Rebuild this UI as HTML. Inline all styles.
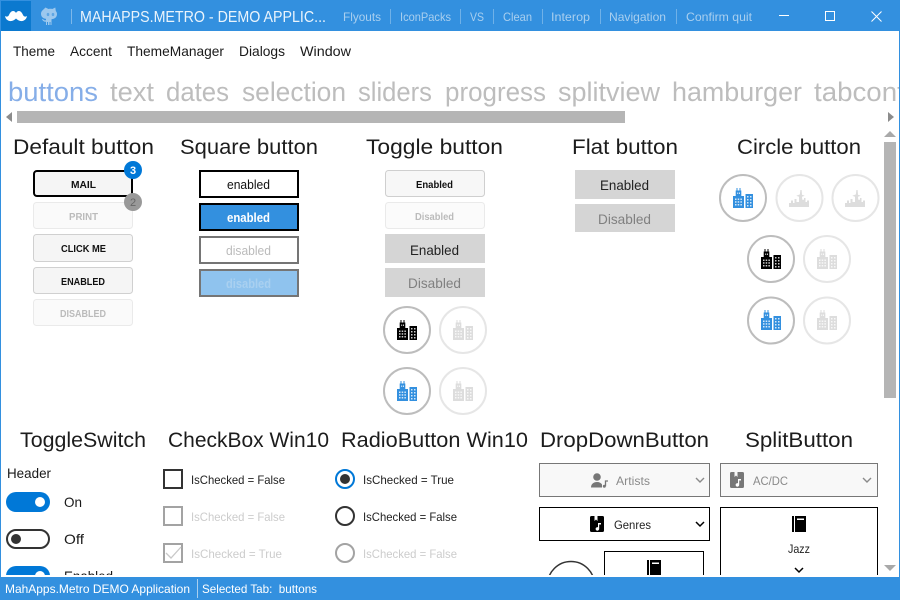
<!DOCTYPE html>
<html lang="en"><head><meta charset="utf-8"><title>MahApps.Metro - Demo Application</title>
<style>
html,body{margin:0;padding:0;background:#fff;width:900px;height:600px;overflow:hidden}
svg{display:block;position:absolute;left:0;top:0}
text{font-family:"Liberation Sans",sans-serif;white-space:pre}
.h{font-size:21px;fill:#1c1c1c}
.m{font-size:14px;fill:#1a1a1a}
.t{font-size:27px;fill:#bdbdbd}
.c{font-size:12px;fill:#a9cfef}
.b{font-size:10px;font-weight:bold;fill:#111}
.d{font-size:10px;font-weight:bold;fill:#bbb}
.s{font-size:12px;fill:#222}
.sd{font-size:12px;fill:#ccc}
.f{font-size:14px;fill:#222}
.fd{font-size:14px;fill:#808080}
</style></head><body>
<svg width="900" height="600" viewBox="0 0 900 600" xmlns="http://www.w3.org/2000/svg">
<defs>
<symbol id="city" viewBox="0 0 20 20">
<path fill="currentColor" d="M3.500 0h1v2.500h2V0h1v2.500h.8V8H11v12H0V8h2.700V2.500h.8zM12.500 6H20v14h-7.500z"/>
<g fill="#fff" fill-opacity=".8">
<rect x="2" y="10.500" width="1.500" height="1.500"/><rect x="4.700" y="10.500" width="1.500" height="1.500"/><rect x="7.400" y="10.500" width="1.500" height="1.500"/>
<rect x="2" y="13.200" width="1.500" height="1.500"/><rect x="4.700" y="13.200" width="1.500" height="1.500"/><rect x="7.400" y="13.200" width="1.500" height="1.500"/>
<rect x="2" y="16" width="1.500" height="1.500"/><rect x="4.700" y="16" width="1.500" height="1.500"/><rect x="7.400" y="16" width="1.500" height="1.500"/>
<rect x="4.200" y="4.500" width="1" height="1.500"/><rect x="6" y="4.500" width="1" height="1.500"/>
<rect x="14" y="8" width="1.500" height="1.500"/><rect x="17" y="8" width="1.500" height="1.500"/>
<rect x="14" y="11" width="1.500" height="1.500"/><rect x="17" y="11" width="1.500" height="1.500"/>
<rect x="14" y="14" width="1.500" height="1.500"/><rect x="17" y="14" width="1.500" height="1.500"/>
<rect x="14" y="17" width="1.500" height="1.500"/><rect x="17" y="17" width="1.500" height="1.500"/>
</g>
</symbol>
<symbol id="sky" viewBox="0 0 20 17">
<path fill="currentColor" d="M11.400 0h1.200l.4 4.800 2.700 1-2.700 1 .3 3H15V8h1.500v4H18v-1.500h2V17H0v-4h2v-2.500h2V13h1.500V9h2v3H10V6.800l-2.700-1 2.700-1 .9-.4z"/>
</symbol>
<symbol id="book" viewBox="0 0 14 16">
<path fill="currentColor" d="M0 0h2v16H0zM3 0h11v16H3z"/><rect x="5" y="2.500" width="7" height="1.500" fill="#fff"/>
</symbol>
<symbol id="music" viewBox="0 0 14 16">
<path fill="currentColor" d="M1.500 0h3v5l1.500-1.500L7.500 5V0h5A1.500 1.500 0 0 1 14 1.500v13a1.500 1.500 0 0 1-1.500 1.500h-11A1.500 1.500 0 0 1 0 14.500v-13A1.500 1.500 0 0 1 1.500 0z"/>
<path fill="#fff" d="M8 7h3v1.500H9.200v4.300a1.800 1.800 0 1 1-1.200-1.600z"/>
</symbol>
<clipPath id="content"><rect x="1" y="32" width="882" height="543"/></clipPath>
<clipPath id="tabs"><rect x="1" y="70" width="898" height="40"/></clipPath>
</defs>

<rect width="900" height="600" fill="#fff"/>
<rect x="0" y="0" width="900" height="31" fill="#3390df"/>
<rect x="0" y="0" width="1" height="600" fill="#3390df"/>
<rect x="899" y="0" width="1" height="600" fill="#3390df"/>
<rect x="1" y="1" width="30" height="30" fill="#0b79cf"/>
<path fill="#fff" d="M5 16C6.500 17 8 17 9 15C10 12.500 11.500 11 13 11C14.500 11 15.500 12 16 13C16.500 12 17.500 11 19 11C20.500 11 22 12.500 23 15C24 17 25.500 17 27 16C26.500 19.500 23.500 21.500 20.500 21C18.500 20.700 17 19.500 16 18.500C15 19.500 13.500 20.700 11.500 21C8.500 21.500 5.500 19.500 5 16z"/>
<path fill="#9cc8ee" d="M45.500 7.500l3 1.500c1.300-.3 2.500-.3 3.800 0l3-1.500.5 3.500c.8.900 1.200 1.900 1.200 3 0 3.200-2.300 5-5.500 5.200V25h-1v-3h-1v3h-1.500v-3h-1v3h-1v-3.300c-1.500.3-3-.3-4-2.400l1-.3c.6 1 1.500 1.500 3 1.200v-1.300c-3-.4-5-2.200-5-5 0-1.100.3-2.100 1-3z"/>
<ellipse cx="48" cy="14.500" rx="1.300" ry="1.600" fill="#5ea6e4"/><ellipse cx="53" cy="14.500" rx="1.300" ry="1.600" fill="#5ea6e4"/>
<rect x="71" y="9" width="1" height="15" fill="#7db8ea"/>
<text x="80" y="22" font-size="16" fill="#eaf4fc" textLength="246" lengthAdjust="spacingAndGlyphs">MAHAPPS.METRO - DEMO APPLIC...</text>

<g class="cmd">
<text class="c" x="343" y="21" textLength="38" lengthAdjust="spacingAndGlyphs">Flyouts</text>
<rect x="390" y="9" width="1" height="15" fill="#6fb1e8"/>
<text class="c" x="400" y="21" textLength="51" lengthAdjust="spacingAndGlyphs">IconPacks</text>
<rect x="460" y="9" width="1" height="15" fill="#6fb1e8"/>
<text class="c" x="470" y="21" textLength="14" lengthAdjust="spacingAndGlyphs">VS</text>
<rect x="493" y="9" width="1" height="15" fill="#6fb1e8"/>
<text class="c" x="503" y="21" textLength="29" lengthAdjust="spacingAndGlyphs">Clean</text>
<rect x="542" y="9" width="1" height="15" fill="#6fb1e8"/>
<text class="c" x="551" y="21" textLength="39" lengthAdjust="spacingAndGlyphs">Interop</text>
<rect x="600" y="9" width="1" height="15" fill="#6fb1e8"/>
<text class="c" x="609" y="21" textLength="57" lengthAdjust="spacingAndGlyphs">Navigation</text>
<rect x="676" y="9" width="1" height="15" fill="#6fb1e8"/>
<text class="c" x="686" y="21" textLength="66" lengthAdjust="spacingAndGlyphs">Confirm quit</text>
</g>
<rect x="779" y="15" width="10" height="1" fill="#fff"/>
<rect x="825.500" y="11.500" width="9" height="9" fill="none" stroke="#fff"/>
<path d="M871.500 11.500l10 10M881.500 11.500l-10 10" stroke="#fff" stroke-width="1" fill="none"/>

<text class="m" x="13" y="56" textLength="42" lengthAdjust="spacingAndGlyphs">Theme</text>
<text class="m" x="70" y="56" textLength="42" lengthAdjust="spacingAndGlyphs">Accent</text>
<text class="m" x="127" y="56" textLength="97" lengthAdjust="spacingAndGlyphs">ThemeManager</text>
<text class="m" x="239" y="56" textLength="46" lengthAdjust="spacingAndGlyphs">Dialogs</text>
<text class="m" x="300" y="56" textLength="51" lengthAdjust="spacingAndGlyphs">Window</text>

<g clip-path="url(#tabs)">
<text class="t" x="8" y="101" style="fill:#86aee8" textLength="90" lengthAdjust="spacingAndGlyphs">buttons</text>
<text class="t" x="110" y="101" textLength="44" lengthAdjust="spacingAndGlyphs">text</text>
<text class="t" x="166" y="101" textLength="63" lengthAdjust="spacingAndGlyphs">dates</text>
<text class="t" x="242" y="101" textLength="104" lengthAdjust="spacingAndGlyphs">selection</text>
<text class="t" x="358" y="101" textLength="74" lengthAdjust="spacingAndGlyphs">sliders</text>
<text class="t" x="445" y="101" textLength="101" lengthAdjust="spacingAndGlyphs">progress</text>
<text class="t" x="558" y="101" textLength="102" lengthAdjust="spacingAndGlyphs">splitview</text>
<text class="t" x="672" y="101" textLength="130" lengthAdjust="spacingAndGlyphs">hamburger</text>
<text class="t" x="814" y="101" textLength="100" lengthAdjust="spacingAndGlyphs">tabcontr</text>
</g>
<rect x="17" y="111" width="608" height="12" fill="#b5b5b5"/>
<path d="M12 112v10l-6-5z" fill="#8c8c8c"/>
<path d="M888 112v10l6-5z" fill="#8c8c8c"/>
<rect x="884" y="142" width="12" height="256" fill="#b5b5b5"/>
<path d="M884 137h12l-6-6z" fill="#a9a9a9"/>
<path d="M884 565h12l-6 6z" fill="#a9a9a9"/>

<g clip-path="url(#content)">
<!-- Headers -->
<text class="h" x="13" y="154" textLength="141" lengthAdjust="spacingAndGlyphs">Default button</text>
<text class="h" x="180" y="154" textLength="138" lengthAdjust="spacingAndGlyphs">Square button</text>
<text class="h" x="366" y="154" textLength="137" lengthAdjust="spacingAndGlyphs">Toggle button</text>
<text class="h" x="572" y="154" textLength="106" lengthAdjust="spacingAndGlyphs">Flat button</text>
<text class="h" x="737" y="154" textLength="124" lengthAdjust="spacingAndGlyphs">Circle button</text>
<text class="h" x="20" y="447" textLength="126" lengthAdjust="spacingAndGlyphs">ToggleSwitch</text>
<text class="h" x="168" y="447" textLength="161" lengthAdjust="spacingAndGlyphs">CheckBox Win10</text>
<text class="h" x="341" y="447" textLength="187" lengthAdjust="spacingAndGlyphs">RadioButton Win10</text>
<text class="h" x="540" y="447" textLength="169" lengthAdjust="spacingAndGlyphs">DropDownButton</text>
<text class="h" x="745" y="447" textLength="108" lengthAdjust="spacingAndGlyphs">SplitButton</text>

<!-- Default buttons -->
<rect x="34" y="171" width="98" height="25" rx="3" fill="#f5f5f5" stroke="#000" stroke-width="2"/>
<text class="b" x="71" y="188" textLength="25" lengthAdjust="spacingAndGlyphs">MAIL</text>
<rect x="33.500" y="202.500" width="99" height="26" rx="3" fill="#fafafa" stroke="#eaeaea"/>
<text class="d" x="69" y="220" textLength="29" lengthAdjust="spacingAndGlyphs">PRINT</text>
<rect x="33.500" y="234.500" width="99" height="27" rx="3" fill="#f5f5f5" stroke="#d0d0d0"/>
<text class="b" x="61" y="252" textLength="45" lengthAdjust="spacingAndGlyphs">CLICK ME</text>
<rect x="33.500" y="267.500" width="99" height="26" rx="3" fill="#f5f5f5" stroke="#d0d0d0"/>
<text class="b" x="61" y="285" textLength="44" lengthAdjust="spacingAndGlyphs">ENABLED</text>
<rect x="33.500" y="299.500" width="99" height="26" rx="3" fill="#fafafa" stroke="#eaeaea"/>
<text class="d" x="60" y="317" textLength="46" lengthAdjust="spacingAndGlyphs">DISABLED</text>
<circle cx="133" cy="170" r="9" fill="#0078d7"/>
<text x="133" y="174" font-size="11" font-weight="bold" fill="#fff" text-anchor="middle">3</text>
<circle cx="133" cy="202" r="9" fill="#999"/>
<text x="133" y="206" font-size="11" fill="#666" text-anchor="middle">2</text>

<!-- Square buttons -->
<rect x="200" y="171" width="98" height="26" fill="#fff" stroke="#000" stroke-width="2"/>
<text x="227" y="189" font-size="13" fill="#111" textLength="43" lengthAdjust="spacingAndGlyphs">enabled</text>
<rect x="200" y="204" width="98" height="26" fill="#3390df" stroke="#000" stroke-width="2"/>
<text x="227" y="222" font-size="13" font-weight="bold" fill="#fff" textLength="43" lengthAdjust="spacingAndGlyphs">enabled</text>
<rect x="200" y="237" width="98" height="26" fill="#fff" stroke="#757575" stroke-width="2"/>
<text x="226" y="255" font-size="13" fill="#bbb" textLength="45" lengthAdjust="spacingAndGlyphs">disabled</text>
<rect x="200" y="270" width="98" height="26" fill="#8fc3ee" stroke="#757575" stroke-width="2"/>
<text x="226" y="288" font-size="13" font-weight="bold" fill="#a9d0f0" textLength="45" lengthAdjust="spacingAndGlyphs">disabled</text>

<!-- Toggle buttons -->
<rect x="385.500" y="170.500" width="99" height="26" rx="3" fill="#f7f7f7" stroke="#cfcfcf"/>
<text class="b" x="416" y="188" textLength="37" lengthAdjust="spacingAndGlyphs">Enabled</text>
<rect x="385.500" y="202.500" width="99" height="26" rx="3" fill="#fbfbfb" stroke="#eaeaea"/>
<text class="d" x="415" y="220" textLength="39" lengthAdjust="spacingAndGlyphs">Disabled</text>
<rect x="385" y="234" width="100" height="29" fill="#d5d5d5"/>
<text class="f" x="410" y="255" textLength="49" lengthAdjust="spacingAndGlyphs">Enabled</text>
<rect x="385" y="268" width="100" height="29" fill="#d5d5d5"/>
<text class="fd" x="408" y="288" textLength="53" lengthAdjust="spacingAndGlyphs">Disabled</text>

<!-- Toggle circles -->
<circle cx="407" cy="330" r="23" fill="#fff" stroke="#bdbdbd" stroke-width="2"/>
<use href="#city" x="397" y="320" width="20" height="20" color="#000"/>
<circle cx="463" cy="330" r="23" fill="#fff" stroke="#e6e6e6" stroke-width="2"/>
<use href="#city" x="453" y="320" width="20" height="20" color="#ddd"/>
<circle cx="407" cy="391" r="23" fill="#fff" stroke="#bdbdbd" stroke-width="2"/>
<use href="#city" x="397" y="381" width="20" height="20" color="#3390df"/>
<circle cx="463" cy="391" r="23" fill="#fff" stroke="#e6e6e6" stroke-width="2"/>
<use href="#city" x="453" y="381" width="20" height="20" color="#ddd"/>

<!-- Flat buttons -->
<rect x="575" y="170" width="100" height="29" fill="#d5d5d5"/>
<text class="f" x="600" y="190" textLength="49" lengthAdjust="spacingAndGlyphs">Enabled</text>
<rect x="575" y="204" width="100" height="28" fill="#d5d5d5"/>
<text class="fd" x="598" y="224" textLength="53" lengthAdjust="spacingAndGlyphs">Disabled</text>

<!-- Circle buttons -->
<circle cx="743" cy="198" r="23" fill="#fff" stroke="#bdbdbd" stroke-width="2"/>
<use href="#city" x="733" y="188" width="20" height="20" color="#3390df"/>
<circle cx="799.500" cy="198" r="23" fill="#fff" stroke="#e6e6e6" stroke-width="2"/>
<use href="#sky" x="789" y="190" width="20" height="17" color="#ddd"/>
<circle cx="855.500" cy="198" r="23" fill="#fff" stroke="#e6e6e6" stroke-width="2"/>
<use href="#sky" x="845" y="190" width="20" height="17" color="#ddd"/>
<circle cx="771" cy="259" r="23" fill="#fff" stroke="#bdbdbd" stroke-width="2"/>
<use href="#city" x="761" y="249" width="20" height="20" color="#000"/>
<circle cx="827" cy="259" r="23" fill="#fff" stroke="#e6e6e6" stroke-width="2"/>
<use href="#city" x="817" y="249" width="20" height="20" color="#ddd"/>
<circle cx="771" cy="320.500" r="23" fill="#fff" stroke="#bdbdbd" stroke-width="2"/>
<use href="#city" x="761" y="310" width="20" height="20" color="#3390df"/>
<circle cx="827" cy="320.500" r="23" fill="#fff" stroke="#e6e6e6" stroke-width="2"/>
<use href="#city" x="817" y="310" width="20" height="20" color="#ddd"/>

<!-- ToggleSwitch -->
<text class="m" x="7" y="478" textLength="44" lengthAdjust="spacingAndGlyphs">Header</text>
<rect x="6" y="492" width="44" height="20" rx="10" fill="#0078d7"/>
<circle cx="40" cy="502" r="5" fill="#fff"/>
<text class="m" x="64" y="507" textLength="18" lengthAdjust="spacingAndGlyphs">On</text>
<rect x="7" y="530" width="42" height="18" rx="9" fill="#fff" stroke="#333" stroke-width="2"/>
<circle cx="16" cy="539" r="5" fill="#333"/>
<text class="m" x="64" y="544" textLength="20" lengthAdjust="spacingAndGlyphs">Off</text>
<rect x="6" y="566" width="44" height="20" rx="10" fill="#0078d7"/>
<circle cx="40" cy="576" r="5" fill="#fff"/>
<text class="m" x="64" y="581" textLength="49" lengthAdjust="spacingAndGlyphs">Enabled</text>

<!-- CheckBox -->
<rect x="164" y="470" width="18" height="18" fill="#fff" stroke="#333" stroke-width="2"/>
<text class="s" x="191" y="484" textLength="94" lengthAdjust="spacingAndGlyphs">IsChecked = False</text>
<rect x="164" y="507" width="18" height="18" fill="#fff" stroke="#a3a3a3" stroke-width="2"/>
<text class="sd" x="191" y="521" textLength="94" lengthAdjust="spacingAndGlyphs">IsChecked = False</text>
<rect x="164" y="544" width="18" height="18" fill="#fff" stroke="#a3a3a3" stroke-width="2"/>
<path d="M166 553l5 5 10-11" fill="none" stroke="#c8c8c8" stroke-width="1.300"/>
<text class="sd" x="191" y="558" textLength="91" lengthAdjust="spacingAndGlyphs">IsChecked = True</text>

<!-- Radio -->
<circle cx="345" cy="479" r="9" fill="#fff" stroke="#0078d7" stroke-width="2"/>
<circle cx="345" cy="479" r="5" fill="#333"/>
<text class="s" x="363" y="484" textLength="91" lengthAdjust="spacingAndGlyphs">IsChecked = True</text>
<circle cx="345" cy="516" r="9" fill="#fff" stroke="#333" stroke-width="2"/>
<text class="s" x="363" y="521" textLength="94" lengthAdjust="spacingAndGlyphs">IsChecked = False</text>
<circle cx="345" cy="553" r="9" fill="#fff" stroke="#a3a3a3" stroke-width="2"/>
<text class="sd" x="363" y="558" textLength="94" lengthAdjust="spacingAndGlyphs">IsChecked = False</text>

<!-- DropDown -->
<rect x="539.500" y="463.500" width="170" height="33" fill="#f8f8f8" stroke="#777"/>
<circle cx="597" cy="477" r="3.800" fill="#777"/>
<path d="M591 487.500c0-3.500 2.500-5.500 6-5.500 2.500 0 4.200 1 5 2.500v3z" fill="#777"/>
<path d="M605.500 486.300v-5.300h2.500" fill="none" stroke="#777" stroke-width="1.300"/>
<circle cx="604.300" cy="486.300" r="1.500" fill="#777"/>
<text x="616" y="485" font-size="12" fill="#8a8a8a" textLength="34" lengthAdjust="spacingAndGlyphs">Artists</text>
<path d="M696 478l4 4 4-4" fill="none" stroke="#8a8a8a" stroke-width="1.400"/>

<rect x="539.500" y="507.500" width="170" height="33" fill="#fff" stroke="#000"/>
<use href="#music" x="590" y="516" width="14" height="16" color="#000"/>
<text x="614" y="529" font-size="12" fill="#222" textLength="37" lengthAdjust="spacingAndGlyphs">Genres</text>
<path d="M696 522l4 4 4-4" fill="none" stroke="#000" stroke-width="1.500"/>

<circle cx="571" cy="585" r="23.500" fill="#fff" stroke="#333" stroke-width="1.500"/>
<rect x="604.500" y="551.500" width="99" height="40" fill="#fff" stroke="#000"/>
<use href="#book" x="647" y="560" width="14" height="16" color="#000"/>

<!-- Split -->
<rect x="720.500" y="463.500" width="157" height="33" fill="#f8f8f8" stroke="#777"/>
<use href="#music" x="730" y="472" width="14" height="16" color="#777"/>
<text x="753" y="485" font-size="12" fill="#8a8a8a" textLength="35" lengthAdjust="spacingAndGlyphs">AC/DC</text>
<path d="M863 478l4 4 4-4" fill="none" stroke="#8a8a8a" stroke-width="1.400"/>
<rect x="720.500" y="507.500" width="157" height="90" fill="#fff" stroke="#000"/>
<use href="#book" x="792" y="516" width="14" height="16" color="#000"/>
<text x="788" y="553" font-size="12" fill="#222" textLength="22" lengthAdjust="spacingAndGlyphs">Jazz</text>
<path d="M795 568l4 4 4-4" fill="none" stroke="#000" stroke-width="1.500"/>
</g>

<!-- Status bar -->
<rect x="0" y="577" width="900" height="23" fill="#3390df"/>
<text x="5" y="593" font-size="12" fill="#fff" textLength="185" lengthAdjust="spacingAndGlyphs">MahApps.Metro DEMO Application</text>
<rect x="197" y="579" width="1" height="19" fill="#a9cfef"/>
<text x="202" y="593" font-size="12" fill="#fff" textLength="115" lengthAdjust="spacingAndGlyphs">Selected Tab:  buttons</text>
</svg>
</body></html>
